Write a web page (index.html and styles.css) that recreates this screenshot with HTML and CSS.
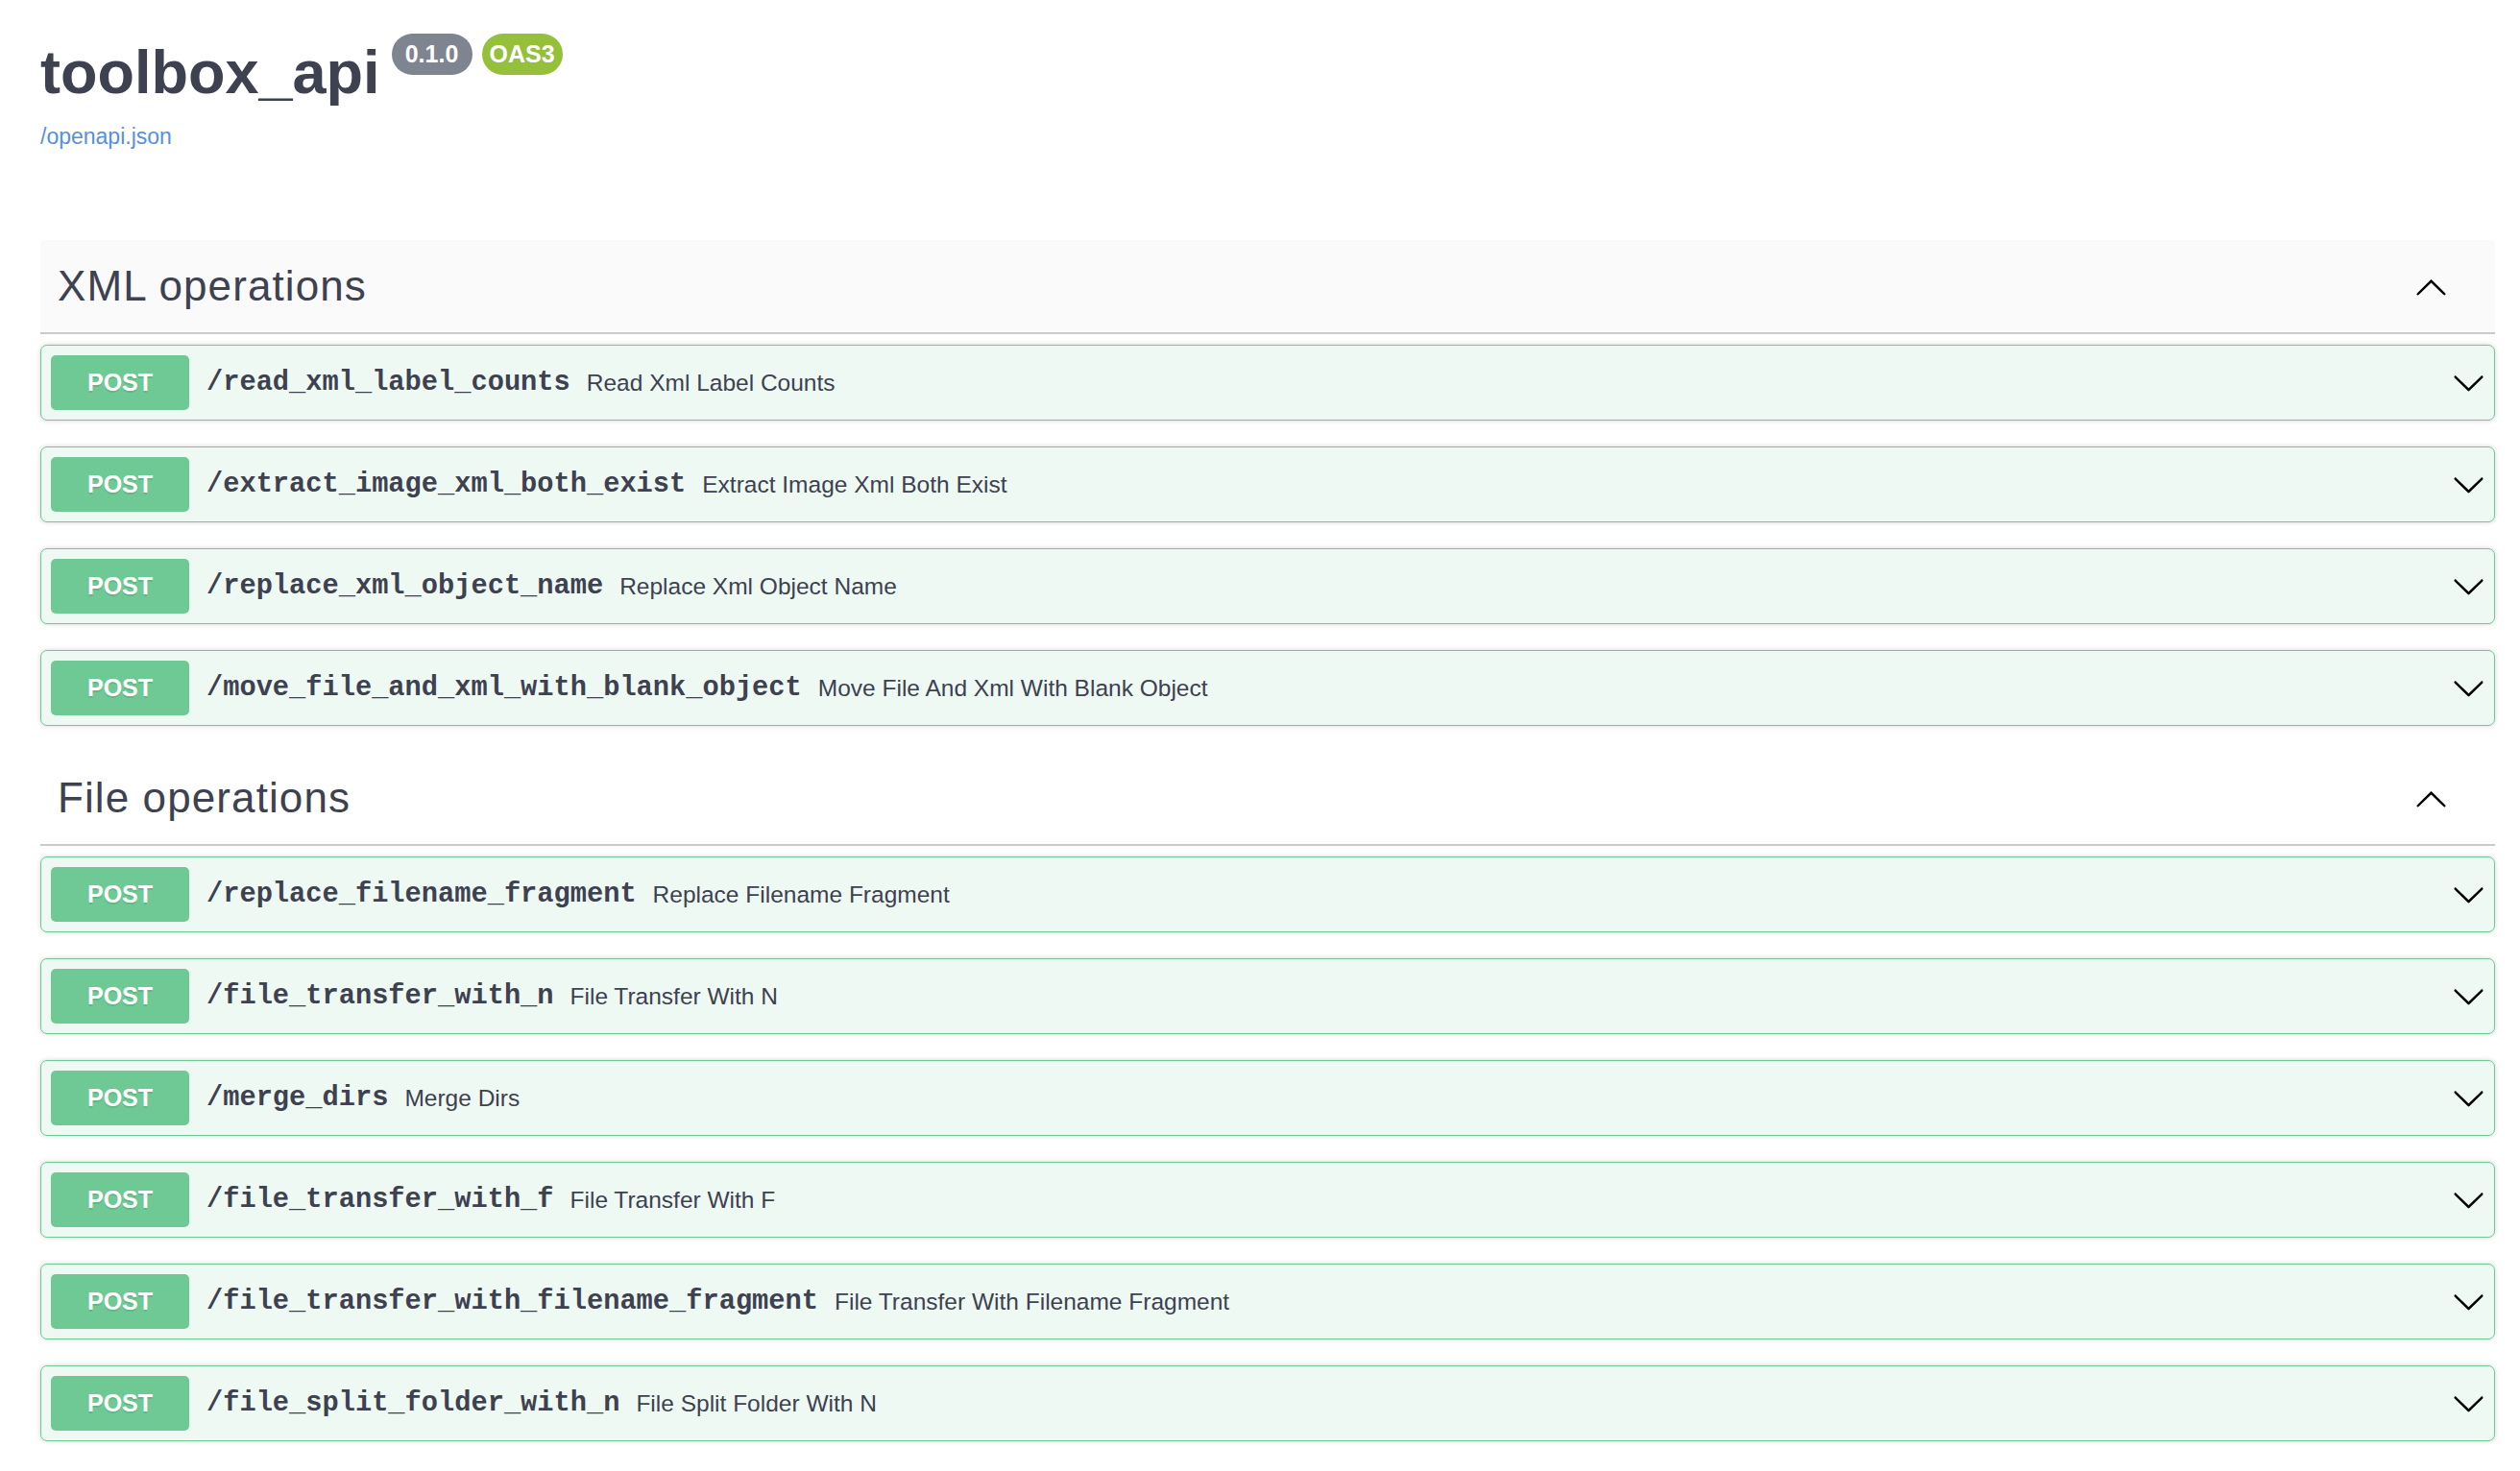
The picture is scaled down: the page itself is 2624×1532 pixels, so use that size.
FILE: index.html
```html
<!DOCTYPE html>
<html lang="en">
<head>
<meta charset="utf-8">
<title>toolbox_api - Swagger UI</title>
<link rel="stylesheet" href="styles.css">
</head>
<body>
<svg class="defs" xmlns="http://www.w3.org/2000/svg" width="0" height="0">
  <defs>
    <symbol id="arrow-up" viewBox="0 0 20 20"><path d="M17.418 14.908c.272.268.709.268.979 0s.271-.701 0-.969l-7.908-7.83c-.27-.268-.707-.268-.979 0l-7.908 7.83c-.27.268-.27.701 0 .969.271.268.709.268.979 0L10 7.771l7.418 7.137z"/></symbol>
    <symbol id="arrow-down" viewBox="0 0 20 20"><path d="M17.418 6.109c.272-.268.709-.268.979 0s.271.701 0 .969l-7.908 7.83c-.27.268-.707.268-.979 0l-7.908-7.83c-.27-.268-.27-.701 0-.969.271-.268.709-.268.979 0L10 13.25l7.418-7.141z"/></symbol>
  </defs>
</svg>
<div class="wrapper">
  <header class="info">
    <div class="title-row">
      <h1 class="title">toolbox_api</h1>
      <div class="pills">
        <span class="pill pill-version">0.1.0</span>
        <span class="pill pill-oas">OAS3</span>
      </div>
    </div>
    <div class="spec-line"><a class="spec-link" href="#">/openapi.json</a></div>
  </header>

  <section class="tag-section">
    <h3 class="tag tag-hover"><span class="tag-name">XML operations</span><svg class="arrow tag-arrow"><use href="#arrow-up"/></svg></h3>
    <div class="opblock"><span class="method">POST</span><span class="path">/read_xml_label_counts</span><span class="desc">Read Xml Label Counts</span><svg class="arrow op-arrow"><use href="#arrow-down"/></svg></div>
    <div class="opblock"><span class="method">POST</span><span class="path">/extract_image_xml_both_exist</span><span class="desc">Extract Image Xml Both Exist</span><svg class="arrow op-arrow"><use href="#arrow-down"/></svg></div>
    <div class="opblock"><span class="method">POST</span><span class="path">/replace_xml_object_name</span><span class="desc">Replace Xml Object Name</span><svg class="arrow op-arrow"><use href="#arrow-down"/></svg></div>
    <div class="opblock"><span class="method">POST</span><span class="path">/move_file_and_xml_with_blank_object</span><span class="desc">Move File And Xml With Blank Object</span><svg class="arrow op-arrow"><use href="#arrow-down"/></svg></div>
  </section>

  <section class="tag-section">
    <h3 class="tag"><span class="tag-name">File operations</span><svg class="arrow tag-arrow"><use href="#arrow-up"/></svg></h3>
    <div class="opblock"><span class="method">POST</span><span class="path">/replace_filename_fragment</span><span class="desc">Replace Filename Fragment</span><svg class="arrow op-arrow"><use href="#arrow-down"/></svg></div>
    <div class="opblock"><span class="method">POST</span><span class="path">/file_transfer_with_n</span><span class="desc">File Transfer With N</span><svg class="arrow op-arrow"><use href="#arrow-down"/></svg></div>
    <div class="opblock"><span class="method">POST</span><span class="path">/merge_dirs</span><span class="desc">Merge Dirs</span><svg class="arrow op-arrow"><use href="#arrow-down"/></svg></div>
    <div class="opblock"><span class="method">POST</span><span class="path">/file_transfer_with_f</span><span class="desc">File Transfer With F</span><svg class="arrow op-arrow"><use href="#arrow-down"/></svg></div>
    <div class="opblock"><span class="method">POST</span><span class="path">/file_transfer_with_filename_fragment</span><span class="desc">File Transfer With Filename Fragment</span><svg class="arrow op-arrow"><use href="#arrow-down"/></svg></div>
    <div class="opblock"><span class="method">POST</span><span class="path">/file_split_folder_with_n</span><span class="desc">File Split Folder With N</span><svg class="arrow op-arrow"><use href="#arrow-down"/></svg></div>
  </section>
</div>
</body>
</html>
```

FILE: styles.css
```css
html, body {
  margin: 0;
  padding: 0;
  background: #ffffff;
}

body {
  font-family: "Liberation Sans", Arial, sans-serif;
  color: #3d4150;
}

.defs {
  position: absolute;
  width: 0;
  height: 0;
  overflow: hidden;
}

.wrapper {
  padding: 35px 26px 40px 42px;
}

/* ---------- info header ---------- */
.title-row {
  display: flex;
  align-items: flex-start;
}

.title {
  margin: 0;
  font-size: 63px;
  line-height: 80px;
  font-weight: 700;
  color: #3d4150;
}

.pills {
  display: flex;
  gap: 10px;
  margin-left: 12px;
}

.pill {
  box-sizing: border-box;
  height: 43px;
  min-width: 84px;
  padding: 0 8px;
  border-radius: 22px;
  color: #ffffff;
  font-size: 25px;
  font-weight: 700;
  line-height: 43px;
  text-align: center;
}

.pill-version {
  background: #7f8491;
}

.pill-oas {
  background: #94c03b;
}

.spec-line {
  margin-top: 12px;
  height: 30px;
}

.spec-link {
  font-size: 23px;
  line-height: 30px;
  color: #568fdd;
  text-decoration: none;
}

/* ---------- tag sections ---------- */
.tag-section {
  margin-top: 93px;
}

.tag-section + .tag-section {
  margin-top: 0;
}

.tag {
  display: flex;
  align-items: center;
  justify-content: space-between;
  height: 96px;
  margin: 0 0 11px;
  padding: 0 49px 0 18px;
  border-bottom: 2px solid #c9cacd;
  font-size: 44px;
  font-weight: 400;
  letter-spacing: 1.1px;
  color: #3d4150;
}

.tag-hover {
  background: #fafafa;
}

.arrow {
  width: 35px;
  height: 35px;
  flex: none;
  fill: #000000;
}

/* ---------- operation blocks ---------- */
.opblock {
  display: flex;
  align-items: center;
  margin: 0 0 27px;
  padding: 10px;
  border: 1px solid #6ec995;
  border-radius: 7px;
  background: #eff9f4;
  box-shadow: 0 0 5px rgba(0, 0, 0, 0.17);
}

.method {
  flex: none;
  display: flex;
  align-items: center;
  justify-content: center;
  width: 144px;
  height: 57px;
  border-radius: 5px;
  background: #6ec995;
  color: #ffffff;
  font-size: 25px;
  font-weight: 700;
  text-shadow: 0 2px 0 rgba(0, 0, 0, 0.1);
}

.path {
  padding: 0 17px 0 18px;
  font-family: "Liberation Mono", "Courier New", monospace;
  font-size: 28.7px;
  font-weight: 700;
  color: #3d4150;
}

.desc {
  flex: 1;
  font-size: 24.5px;
  color: #3d4150;
}

.op-arrow {
  margin-right: -1px;
}
```
